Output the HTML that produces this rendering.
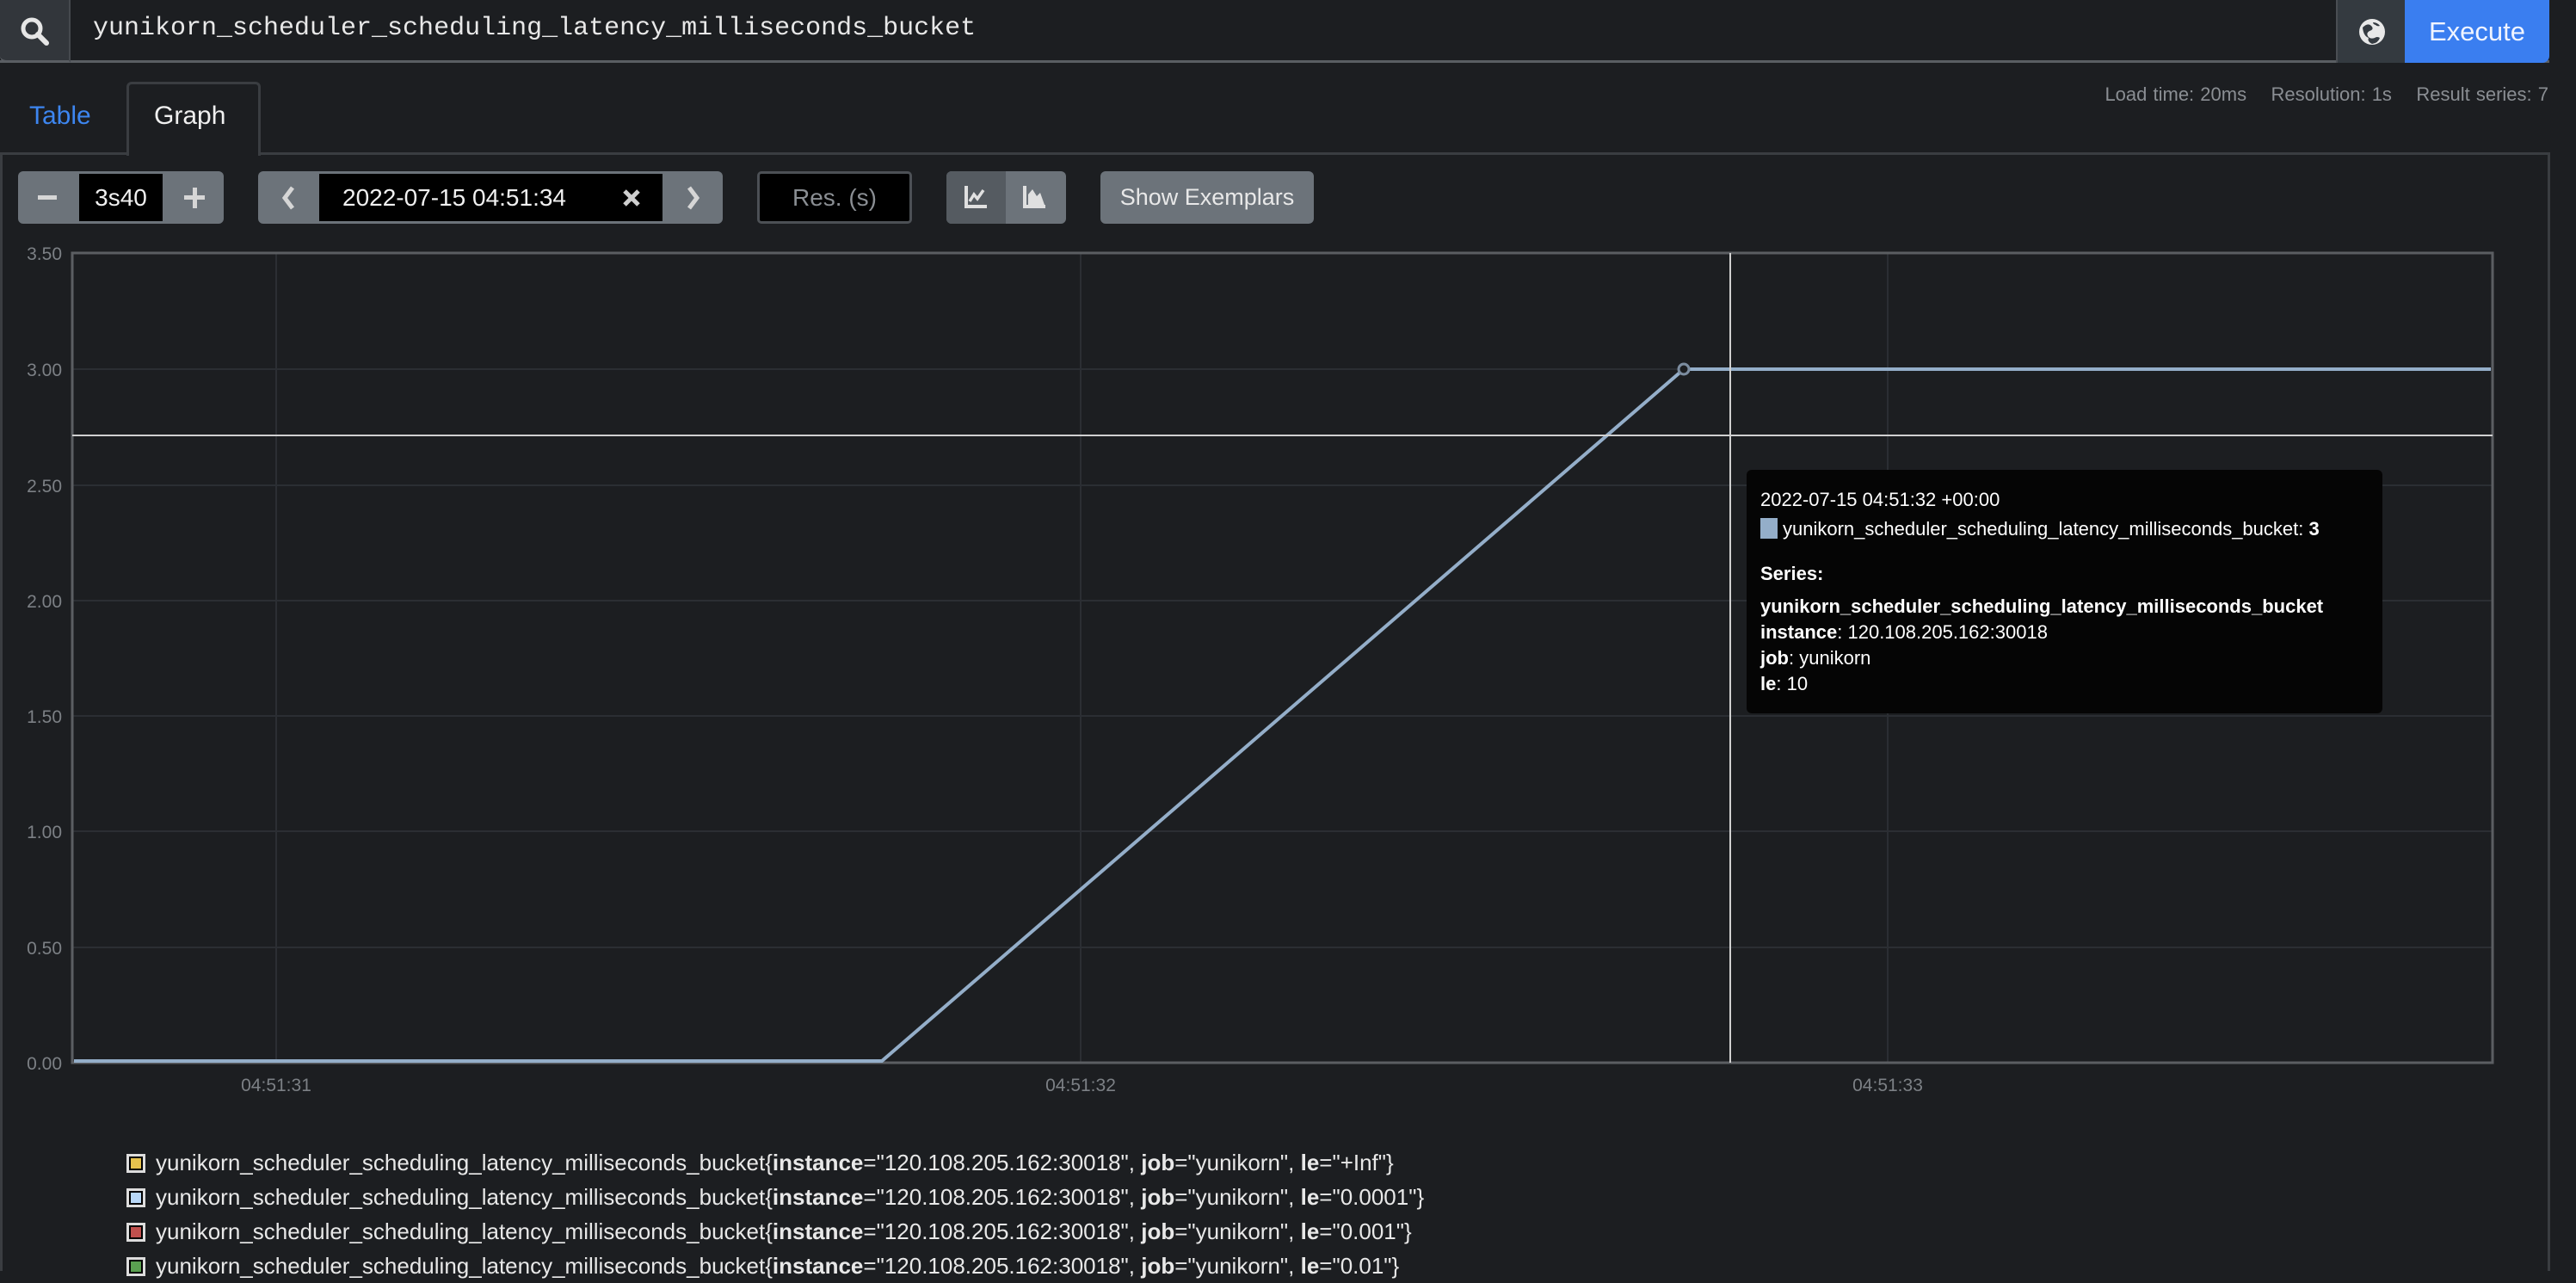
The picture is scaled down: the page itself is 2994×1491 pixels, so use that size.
<!DOCTYPE html>
<html><head><meta charset="utf-8"><style>
*{box-sizing:border-box;margin:0;padding:0}
body{width:2994px;height:1476px;background:#1c1e21;overflow:hidden;font-family:"Liberation Sans",sans-serif;color:#e0e0e0;position:relative}
.a{position:absolute}
</style></head><body>
<div class="a" style="left:0;top:0;width:2963px;height:73px;border-bottom:3px solid #5a5e63;background:#1c1e21"></div>
<div class="a" style="left:0;top:0;width:82px;height:73px;background:#32363b;border-right:2px solid #45494e;border-bottom:3px solid #5a5e63;border-radius:0 0 0 8px"></div>
<svg class="a" style="left:22px;top:18px" width="36" height="36" viewBox="0 0 36 36"><circle cx="15" cy="15" r="10" fill="none" stroke="#e6e6e6" stroke-width="5"/><line x1="22" y1="22" x2="32" y2="32" stroke="#e6e6e6" stroke-width="6" stroke-linecap="round"/></svg>
<div class="a" style="left:108px;top:16px;font-family:'Liberation Mono',monospace;font-size:30px;color:#e8e8e8">yunikorn_scheduler_scheduling_latency_milliseconds_bucket</div>
<div class="a" style="left:2715px;top:0;width:82px;height:73px;background:#343a40;border-left:2px solid #4a4e53"></div>
<svg class="a" style="left:2740px;top:20px" width="34" height="34" viewBox="0 0 34 34"><circle cx="17" cy="17" r="15" fill="#e8e8e8"/><path d="M6 12 q6 -6 10 -2 q4 4 -2 6 q-4 2 -2 6 q3 4 8 2 q3 -2 6 0 q-2 6 -9 7 q-6 -3 -4 -7 q-6 -2 -7 -12z M18 6 q5 0 8 4 q-3 1 -5 -1 q-3 -1 -3 -3z" fill="#343a40"/></svg>
<div class="a" style="left:2795px;top:0;width:168px;height:73px;background:#3a7ef0;border-radius:0 0 8px 0;color:#f0f4ff;font-size:31px;line-height:73px;text-align:center">Execute</div>
<div class="a" style="left:0;top:177px;width:2964px;height:1300px;border-left:3px solid #3a3d41;border-right:3px solid #3a3d41;border-top:3px solid #3a3d41"></div>
<div class="a" style="left:147px;top:95px;width:156px;height:86px;background:#1c1e21;border:3px solid #3a3d41;border-bottom:none;border-radius:6px 6px 0 0"></div>
<div class="a" style="left:34px;top:118px;font-size:30px;color:#3d86f0">Table</div>
<div class="a" style="left:179px;top:118px;font-size:30px;color:#f0f0f0">Graph</div>
<div class="a" style="right:32px;top:97px;font-size:22px;color:#8a8e93;word-spacing:1px">Load time: 20ms &nbsp;&nbsp;&nbsp;Resolution: 1s &nbsp;&nbsp;&nbsp;Result series: 7</div>
<div class="a" style="left:21px;top:199px;width:239px;height:61px;background:#6c737a;border-radius:6px"></div>
<div class="a" style="left:44px;top:227px;width:22px;height:5px;background:#d6d6d6"></div>
<div class="a" style="left:92px;top:202px;width:97px;height:55px;background:#000;color:#f0f0f0;font-size:28px;line-height:55px;text-align:center">3s40</div>
<div class="a" style="left:214px;top:227px;width:24px;height:5px;background:#d6d6d6"></div>
<div class="a" style="left:224px;top:218px;width:5px;height:24px;background:#d6d6d6"></div>
<div class="a" style="left:300px;top:199px;width:540px;height:61px;background:#6c737a;border-radius:6px"></div>
<svg class="a" style="left:322px;top:214px" width="28" height="32"><path d="M18 4 L9 16 L18 28" fill="none" stroke="#d6d6d6" stroke-width="5"/></svg>
<div class="a" style="left:371px;top:202px;width:399px;height:55px;background:#000"></div>
<div class="a" style="left:398px;top:202px;font-size:28px;line-height:55px;color:#f0f0f0">2022-07-15 04:51:34</div>
<svg class="a" style="left:722px;top:218px" width="24" height="24"><path d="M4 4 L20 20 M20 4 L4 20" stroke="#cfcfcf" stroke-width="5"/></svg>
<svg class="a" style="left:792px;top:214px" width="28" height="32"><path d="M9 4 L18 16 L9 28" fill="none" stroke="#d6d6d6" stroke-width="5"/></svg>
<div class="a" style="left:880px;top:199px;width:180px;height:61px;background:#000;border:3px solid #4c5055;border-radius:5px;color:#8a8e93;font-size:28px;line-height:55px;text-align:center">Res. (s)</div>
<div class="a" style="left:1100px;top:199px;width:139px;height:61px;background:#6c737a;border-radius:6px;overflow:hidden"><div style="width:69px;height:61px;background:#555b61"></div></div>
<svg class="a" style="left:1120px;top:214px" width="30" height="30"><path d="M3 2 V26 H27" fill="none" stroke="#e0e0e0" stroke-width="4"/><path d="M7 20 L12 12 L16 17 L23 7" fill="none" stroke="#e0e0e0" stroke-width="3.5"/></svg>
<svg class="a" style="left:1188px;top:214px" width="30" height="30"><path d="M3 2 V26 H27" fill="none" stroke="#e0e0e0" stroke-width="4"/><path d="M7 24 L7 12 L12 6 L17 14 L21 10 L26 24Z" fill="#e0e0e0"/></svg>
<div class="a" style="left:1279px;top:199px;width:248px;height:61px;background:#6c737a;border-radius:6px;color:#e8e8e8;font-size:27px;line-height:61px;text-align:center">Show Exemplars</div>
<svg class="a" style="left:0;top:280px" width="2994" height="1000" viewBox="0 280 2994 1000" font-family="Liberation Sans, sans-serif">
<g stroke="#2b2e33" stroke-width="2">
<line x1="84" y1="429" x2="2897" y2="429"/><line x1="84" y1="564" x2="2897" y2="564"/><line x1="84" y1="698" x2="2897" y2="698"/><line x1="84" y1="832" x2="2897" y2="832"/><line x1="84" y1="966" x2="2897" y2="966"/><line x1="84" y1="1101" x2="2897" y2="1101"/>
<line x1="321" y1="294" x2="321" y2="1235"/><line x1="1256" y1="294" x2="1256" y2="1235"/><line x1="2194" y1="294" x2="2194" y2="1235"/>
</g>
<rect x="84" y="294" width="2813" height="941" fill="none" stroke="#5b5e62" stroke-width="3"/>
<g fill="#7c8085" font-size="21" text-anchor="end">
<text x="72" y="302">3.50</text><text x="72" y="437">3.00</text><text x="72" y="572">2.50</text><text x="72" y="706">2.00</text><text x="72" y="840">1.50</text><text x="72" y="974">1.00</text><text x="72" y="1109">0.50</text><text x="72" y="1243">0.00</text>
</g>
<g fill="#7c8085" font-size="21" text-anchor="middle"><text x="321" y="1268">04:51:31</text><text x="1256" y="1268">04:51:32</text><text x="2194" y="1268">04:51:33</text></g>
<polyline points="86,1233 1025,1233 1957,429 2895,429" fill="none" stroke="#94aec9" stroke-width="4"/>
<circle cx="1957" cy="429" r="6" fill="#1c1e21" stroke="#7c8da0" stroke-width="3"/>
<line x1="84" y1="506" x2="2897" y2="506" stroke="#d0d0d0" stroke-width="2"/>
<line x1="2011" y1="294" x2="2011" y2="1235" stroke="#d0d0d0" stroke-width="2"/>
</svg>
<div class="a" style="left:2030px;top:546px;width:739px;height:283px;background:#050505;border-radius:6px;color:#fff;font-size:22px;padding:20px 0 0 16px;line-height:30px">
<div>2022-07-15 04:51:32 +00:00</div>
<div style="margin-top:4px"><span style="display:inline-block;width:20px;height:24px;background:#94aec9;vertical-align:-4px;margin-right:6px"></span>yunikorn_scheduler_scheduling_latency_milliseconds_bucket: <b>3</b></div>
<div style="margin-top:22px"><b>Series:</b></div>
<div style="margin-top:8px;line-height:30px"><b>yunikorn_scheduler_scheduling_latency_milliseconds_bucket</b><br><b>instance</b>: 120.108.205.162:30018<br><b>job</b>: yunikorn<br><b>le</b>: 10</div>
</div>
<div class="a" style="left:147px;top:1331px;font-size:26px;line-height:40px;color:#e8e8e8;white-space:nowrap">
<div><span style="display:inline-block;width:22px;height:22px;border:3px solid #ddd;background:#e6c24d;outline:2px solid #000;outline-offset:-5px;vertical-align:-3px;margin-right:12px"></span>yunikorn_scheduler_scheduling_latency_milliseconds_bucket{<b>instance</b>="120.108.205.162:30018", <b>job</b>="yunikorn", <b>le</b>="+Inf"}</div>
<div><span style="display:inline-block;width:22px;height:22px;border:3px solid #ddd;background:#b8d8f8;outline:2px solid #000;outline-offset:-5px;vertical-align:-3px;margin-right:12px"></span>yunikorn_scheduler_scheduling_latency_milliseconds_bucket{<b>instance</b>="120.108.205.162:30018", <b>job</b>="yunikorn", <b>le</b>="0.0001"}</div>
<div><span style="display:inline-block;width:22px;height:22px;border:3px solid #ddd;background:#c0504d;outline:2px solid #000;outline-offset:-5px;vertical-align:-3px;margin-right:12px"></span>yunikorn_scheduler_scheduling_latency_milliseconds_bucket{<b>instance</b>="120.108.205.162:30018", <b>job</b>="yunikorn", <b>le</b>="0.001"}</div>
<div><span style="display:inline-block;width:22px;height:22px;border:3px solid #ddd;background:#5aa050;outline:2px solid #000;outline-offset:-5px;vertical-align:-3px;margin-right:12px"></span>yunikorn_scheduler_scheduling_latency_milliseconds_bucket{<b>instance</b>="120.108.205.162:30018", <b>job</b>="yunikorn", <b>le</b>="0.01"}</div>
</div>
</body></html>
